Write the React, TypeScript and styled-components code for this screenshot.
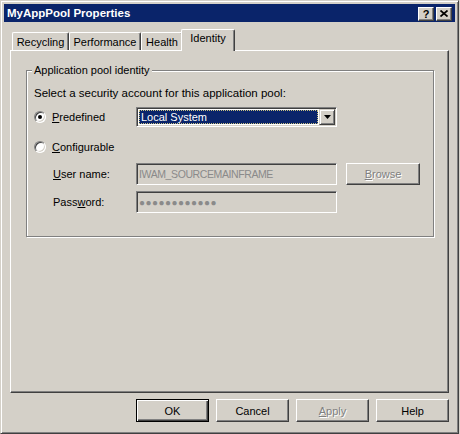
import React from "react";
import styled, { createGlobalStyle, css } from "styled-components";

const FACE = "#d4d0c8";
const SHADOW = "#808080";
const DARK = "#404040";
const HI = "#ffffff";
const NAVY = "#0a246a";
const FONT = `"Liberation Sans", Arial, sans-serif`;

const Global = createGlobalStyle`
  html, body { margin: 0; padding: 0; background: ${FACE}; }
  body { font-family: ${FONT}; font-size: 11px; color: #000; }
  * { box-sizing: border-box; }
  u { text-decoration-thickness: 1px; text-underline-offset: 1px; }
`;

const Window = styled.div`
  width: 459px;
  height: 434px;
  background: ${FACE};
  border: 1px solid;
  border-color: ${FACE} ${DARK} ${DARK} ${FACE};
  box-shadow: inset 1px 1px 0 ${HI}, inset -1px -1px 0 ${SHADOW};
  padding: 3px;
  display: flex;
  flex-direction: column;
`;

const TitleBar = styled.div`
  height: 18px;
  background: ${NAVY};
  display: flex;
  align-items: center;
  padding: 0 3px 0 3px;
`;

const TitleText = styled.div`
  color: #fff;
  font-weight: bold;
  font-size: 11.5px;
  line-height: 18px;
`;

const TitleButtons = styled.div`
  margin-left: auto;
  display: flex;
  gap: 2px;
  margin-top: 1px;
`;

const CaptionButton = styled.div`
  width: 16px;
  height: 14px;
  background: ${FACE};
  border: 1px solid;
  border-color: ${HI} ${DARK} ${DARK} ${HI};
  box-shadow: inset -1px -1px 0 ${SHADOW};
  display: flex;
  align-items: center;
  justify-content: center;
  font-weight: bold;
  font-size: 11px;
  line-height: 12px;
  color: #000;
`;

const Body = styled.div`
  flex: 1;
  display: flex;
  flex-direction: column;
  padding: 0 6px;
`;

const TabStrip = styled.div`
  height: 28px;
  display: flex;
  align-items: flex-end;
  padding-left: 2px;
`;

const Tab = styled.div<{ $active?: boolean; $w: number }>`
  position: relative;
  width: ${(p) => p.$w}px;
  height: 18px;
  padding-top: 2px;
  text-align: center;
  line-height: 15px;
  border-top: 1px solid ${HI};
  border-left: 1px solid ${HI};
  border-right: 1px solid ${DARK};
  box-shadow: inset -1px 0 0 ${SHADOW};
  border-radius: 2px 2px 0 0;
  background: ${FACE};
  white-space: nowrap;
  ${(p) =>
    p.$active &&
    css`
      width: ${p.$w + 4}px;
      height: 22px;
      margin: 0 -2px -1px -2px;
      padding-top: 1px;
      z-index: 1;
    `}
`;

const Panel = styled.div`
  height: 343px;
  border: 1px solid;
  border-color: ${HI} ${DARK} ${DARK} ${HI};
  box-shadow: inset -1px -1px 0 ${SHADOW};
  display: flex;
  flex-direction: column;
`;

const GroupBox = styled.div`
  position: relative;
  margin: 19px 14px 0 15px;
  border: 1px solid ${SHADOW};
  box-shadow: inset 1px 1px 0 ${HI}, 1px 1px 0 ${HI};
  padding: 15px 0 23px 7px;
  display: flex;
  flex-direction: column;
`;

const Legend = styled.span`
  position: absolute;
  top: -8px;
  left: 5px;
  padding: 0 2px;
  background: ${FACE};
  line-height: 14px;
`;

const Intro = styled.div`
  font-size: 11.5px;
  line-height: 14px;
  height: 14px;
`;

const Row = styled.div<{ $gap: number; $h: number }>`
  display: flex;
  align-items: center;
  margin-top: ${(p) => p.$gap}px;
  height: ${(p) => p.$h}px;
`;

const LabelCell = styled.label<{ $indent?: boolean }>`
  width: 102px;
  flex: none;
  display: flex;
  align-items: center;
  padding-left: ${(p) => (p.$indent ? 19 : 0)}px;
`;

const RadioCircle = styled.span<{ $checked?: boolean }>`
  position: relative;
  width: 12px;
  height: 12px;
  border-radius: 50%;
  background: #fff;
  border: 1px solid;
  border-color: ${SHADOW} ${HI} ${HI} ${SHADOW};
  box-shadow: inset 1px 1px 0 ${DARK}, inset -1px -1px 0 ${FACE};
  flex: none;
  margin-right: 6px;
  ${(p) =>
    p.$checked &&
    css`
      &::after {
        content: "";
        position: absolute;
        left: 3px;
        top: 3px;
        width: 4px;
        height: 4px;
        border-radius: 50%;
        background: #000;
      }
    `}
`;

const sunken = css`
  border: 1px solid;
  border-color: ${SHADOW} ${HI} ${HI} ${SHADOW};
  box-shadow: inset 1px 1px 0 ${DARK}, inset -1px -1px 0 ${FACE};
`;

const SelectBox = styled.div`
  ${sunken};
  width: 201px;
  height: 20px;
  background: #fff;
  display: flex;
  padding: 1px;
`;

const Selected = styled.div`
  flex: 1;
  margin: 1px;
  background: ${NAVY};
  color: #fff;
  outline: 1px dotted #c8c080;
  outline-offset: -1px;
  padding-left: 2px;
  line-height: 14px;
`;

const ArrowButton = styled.div`
  width: 16px;
  height: 16px;
  background: ${FACE};
  border: 1px solid;
  border-color: ${FACE} ${DARK} ${DARK} ${FACE};
  box-shadow: inset 1px 1px 0 ${HI}, inset -1px -1px 0 ${SHADOW};
  display: flex;
  align-items: center;
  justify-content: center;
`;

const TextField = styled.div<{ $h: number }>`
  ${sunken};
  width: 201px;
  height: ${(p) => p.$h}px;
  background: ${FACE};
  color: #8a8a8a;
  padding-left: 2px;
  display: flex;
  align-items: center;
  white-space: nowrap;
  overflow: hidden;
`;

const FieldText = styled.span`
  font-size: 10.5px;
  letter-spacing: -0.4px;
`;

const Dots = styled.span`
  font-size: 10px;
  letter-spacing: 0.45px;
  color: #8a8a8a;
`;

const raised = css`
  border: 1px solid;
  border-color: ${HI} ${DARK} ${DARK} ${HI};
  box-shadow: inset -1px -1px 0 ${SHADOW};
`;

const Button = styled.div<{ $disabled?: boolean; $default?: boolean; $w?: number; $h?: number }>`
  ${raised};
  width: ${(p) => p.$w ?? 73}px;
  height: ${(p) => p.$h ?? 23}px;
  background: ${FACE};
  display: flex;
  align-items: center;
  justify-content: center;
  flex: none;
  ${(p) =>
    p.$disabled &&
    css`
      color: ${SHADOW};
      text-shadow: 1px 1px 0 ${HI};
    `}
  ${(p) =>
    p.$default &&
    css`
      border: 1px solid #000;
      box-shadow: inset 1px 1px 0 ${HI}, inset -1px -1px 0 ${DARK}, inset -2px -2px 0 ${SHADOW};
    `}
`;

const BrowseButton = styled(Button)`
  margin-left: 9px;
`;

const Footer = styled.div`
  margin-top: 6px;
  display: flex;
  justify-content: flex-end;
  gap: 7px;
`;

export default function App() {
  return (
    <>
      <Global />
      <Window>
        <TitleBar>
          <TitleText>MyAppPool Properties</TitleText>
          <TitleButtons>
            <CaptionButton>?</CaptionButton>
            <CaptionButton>
              <svg width="8" height="7" viewBox="0 0 8 7">
                <path d="M0.5 0.5 L7.5 6.5 M7.5 0.5 L0.5 6.5" stroke="#000" strokeWidth="1.7" />
              </svg>
            </CaptionButton>
          </TitleButtons>
        </TitleBar>
        <Body>
          <TabStrip>
            <Tab $w={57}>Recycling</Tab>
            <Tab $w={72}>Performance</Tab>
            <Tab $w={42}>Health</Tab>
            <Tab $w={50} $active>
              Identity
            </Tab>
          </TabStrip>
          <Panel>
            <GroupBox>
              <Legend>Application pool identity</Legend>
              <Intro>Select a security account for this application pool:</Intro>
              <Row $gap={7} $h={20}>
                <LabelCell>
                  <RadioCircle $checked />
                  <span>
                    <u>P</u>redefined
                  </span>
                </LabelCell>
                <SelectBox>
                  <Selected>Local System</Selected>
                  <ArrowButton>
                    <svg width="7" height="4" viewBox="0 0 7 4">
                      <path d="M0 0 H7 L3.5 4 Z" fill="#000" />
                    </svg>
                  </ArrowButton>
                </SelectBox>
              </Row>
              <Row $gap={10} $h={20}>
                <LabelCell>
                  <RadioCircle />
                  <span>
                    <u>C</u>onfigurable
                  </span>
                </LabelCell>
              </Row>
              <Row $gap={6} $h={22}>
                <LabelCell $indent>
                  <span>
                    <u>U</u>ser name:
                  </span>
                </LabelCell>
                <TextField $h={22}>
                  <FieldText>IWAM_SOURCEMAINFRAME</FieldText>
                </TextField>
                <BrowseButton $disabled $w={74} $h={22}>
                  <span>
                    <u>B</u>rowse
                  </span>
                </BrowseButton>
              </Row>
              <Row $gap={6} $h={22}>
                <LabelCell $indent>
                  <span>
                    Pass<u>w</u>ord:
                  </span>
                </LabelCell>
                <TextField $h={22}>
                  <Dots>●●●●●●●●●●●●</Dots>
                </TextField>
              </Row>
            </GroupBox>
          </Panel>
          <Footer>
            <Button $default>OK</Button>
            <Button>Cancel</Button>
            <Button $disabled>
              <span>
                <u>A</u>pply
              </span>
            </Button>
            <Button>Help</Button>
          </Footer>
        </Body>
      </Window>
    </>
  );
}
